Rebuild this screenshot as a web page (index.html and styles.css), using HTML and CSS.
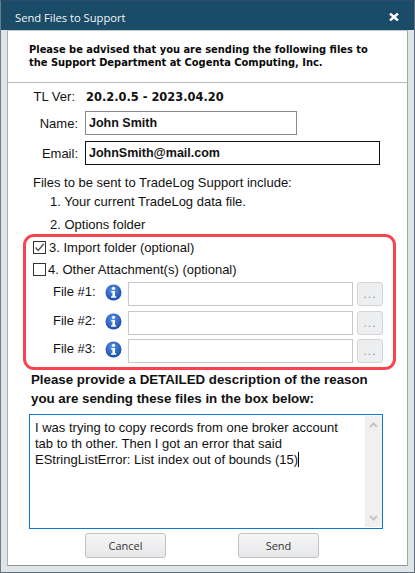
FILE: index.html
```html
<!DOCTYPE html>
<html lang="en">
<head>
<meta charset="utf-8">
<title>Send Files to Support</title>
<link rel="stylesheet" href="styles.css">
</head>
<body>
<div class="window">
  <div class="titlebar">
    <span class="title">Send Files to Support</span>
    <svg class="close" width="10" height="8" viewBox="0 0 10 8"><path d="M1 .5L9 7.500M9 .5L1 7.500" stroke="#fff" stroke-width="2.400" fill="none"/></svg>
  </div>
  <div class="frame">
    <div class="content">
      <div class="notice">Please be advised that you are sending the following files to<br>the Support Department at Cogenta Computing, Inc.</div>
      <div class="form">
        <div class="row ver-row"><span class="label ver-label">TL Ver:</span><span class="ver">20.2.0.5 - 2023.04.20</span></div>
        <div class="row name-row"><span class="label">Name:</span><div class="input name-input">John Smith</div></div>
        <div class="row email-row"><span class="label">Email:</span><div class="input email-input">JohnSmith@mail.com</div></div>
        <div class="line intro">Files to be sent to TradeLog Support include:</div>
        <div class="line item item-1">1. Your current TradeLog data file.</div>
        <div class="line item item-2">2. Options folder</div>
        <div class="optional">
          <div class="check-row"><span class="check"><svg width="13" height="13" viewBox="0 0 13 13"><path d="M2.500 6.500L5.200 9.500L10.800 2.800" stroke="#555" stroke-width="1.400" fill="none"/></svg></span><span>3. Import folder (optional)</span></div>
          <div class="check-row second"><span class="check"></span><span>4. Other Attachment(s) (optional)</span></div>
          <div class="file-row first">
            <span class="file-label">File #1:</span>
            <svg class="info" width="17" height="17" viewBox="0 0 17 17"><use href="#i"/></svg>
            <div class="file-input"></div><div class="browse">...</div>
          </div>
          <div class="file-row">
            <span class="file-label">File #2:</span>
            <svg class="info" width="17" height="17" viewBox="0 0 17 17"><use href="#i"/></svg>
            <div class="file-input"></div><div class="browse">...</div>
          </div>
          <div class="file-row last">
            <span class="file-label">File #3:</span>
            <svg class="info" width="17" height="17" viewBox="0 0 17 17"><use href="#i"/></svg>
            <div class="file-input"></div><div class="browse">...</div>
          </div>
        </div>
        <div class="prompt">Please provide a DETAILED description of the reason<br>you are sending these files in the box below:</div>
        <div class="memo">
          <div class="memo-text">I was trying to copy records from one broker account<br>tab to th other. Then I got an error that said<br>EStringListError: List index out of bounds (15)<span class="caret"></span></div>
          <div class="scroll">
            <svg width="9" height="6" viewBox="0 0 9 6"><path d="M1 5L4.500 1.500L8 5" stroke="#c4c4c4" stroke-width="2" fill="none"/></svg>
            <svg width="9" height="6" viewBox="0 0 9 6"><path d="M1 1L4.500 4.500L8 1" stroke="#c4c4c4" stroke-width="2" fill="none"/></svg>
          </div>
        </div>
        <div class="actions"><div class="btn">Cancel</div><div class="btn">Send</div></div>
      </div>
    </div>
  </div>
</div>
<svg class="defs" width="0" height="0">
  <defs>
    <radialGradient id="g" cx="45%" cy="35%" r="70%"><stop offset="0" stop-color="#5b94e6"/><stop offset="1" stop-color="#1546a8"/></radialGradient>
    <g id="i">
      <circle cx="8.500" cy="8.500" r="8" fill="url(#g)"/>
      <circle cx="8.500" cy="4.300" r="1.600" fill="#fff"/>
      <path d="M6.300 7h3.700v5.300h1.200v1.500H6.100v-1.500h1.300V8.500H6.300z" fill="#fff"/>
    </g>
  </defs>
</svg>
</body>
</html>
```
FILE: styles.css
```css
* { box-sizing: border-box; }
html, body { margin: 0; padding: 0; }
body { width: 415px; height: 573px; overflow: hidden; background: #fff; }
.defs { position: absolute; }
.window {
  width: 415px; height: 573px; display: flex; flex-direction: column;
  background: #e1e5e9; border: 1px solid #5d6f7d; border-top-color: #2f4a70; border-left-color: #6a7c88;
  font-family: "Liberation Sans", Arial, sans-serif; font-size: 13px; color: #111;
}
.titlebar {
  height: 29px; flex: none; display: flex; align-items: center; justify-content: space-between;
  padding: 3px 15px 0 14px; background: #1a4c68; color: #f2f6f8;
}
.title { font-family: "Open Sans", sans-serif; font-size: 11.200px; }
.frame { flex: 1; padding: 0 6px 6px 6px; display: flex; }
.content { flex: 1; background: #fff; border: 1px solid #8f9a92; border-right-color: #94b58a; border-top-color: #c4c8cb; display: flex; flex-direction: column; border-left-color: #aab0b4; }
.notice {
  height: 52px; flex: none; border-bottom: 1px solid #b4babd; padding: 12px 0 0 21px;
  font-family: "DejaVu Sans Condensed", "DejaVu Sans", sans-serif; font-weight: 700; font-size: 11px; line-height: 13px; color: #0a0a0a;
  white-space: nowrap;
}
.form { flex: 1; }
.row { display: flex; align-items: center; }
.label { width: 70px; text-align: right; margin-right: 7px; flex: none; }
.ver-row { height: 26px; }
.ver-row .label { width: 67px; margin-right: 10px; }
.ver { font-family: "DejaVu Sans Condensed", "DejaVu Sans", sans-serif; font-weight: 700; font-size: 12.700px; margin-left: 1px; }
.name-row { height: 24px; margin-top: 2px; }
.email-row { height: 24px; margin-top: 6px; }
.input { height: 24px; display: flex; align-items: center; padding-left: 3px; font-weight: 700; font-size: 12.500px; }
.name-input { width: 212px; border: 1px solid #8a8a8a; }
.email-input { width: 295px; border: 1px solid #111; margin-left: -1px; }
.email-row .label { margin-right: 8px; }
.line { white-space: nowrap; }
.intro { margin: 9px 0 0 25px; height: 18px; line-height: 18px; }
.item { margin-left: 42px; height: 18px; line-height: 18px; }
.item-1 { margin-top: 1px; }
.item-2 { margin-top: 5px; }
.optional {
  width: 373px; height: 136px; margin: 0 0 0 15px; border: 3px solid #f64550; border-radius: 11px;
  padding: 2px 0 0 7px;
}
.check-row { display: flex; align-items: center; height: 16px; gap: 3px; }
.check-row.second { margin-top: 6px; gap: 2px; }
.check { width: 13px; height: 13px; border: 1px solid #333; display: block; flex: none; position: relative; }
.check svg { position: absolute; left: -1px; top: -1px; }
.file-row { display: flex; align-items: center; height: 24px; margin-top: 5px; }
.file-row.first { margin-top: 5px; }
.file-row.last { margin-top: 4px; }
.file-label { width: 51px; margin-left: 20px; flex: none; position: relative; top: -3px; }
.info { margin-left: 1px; margin-right: 6px; flex: none; position: relative; top: -2px; }
.file-input { width: 225px; height: 24px; border: 1px solid #c8c8c8; background: #fff; }
.browse {
  width: 26px; height: 24px; margin-left: 4px; border: 1px solid #d2d4d6; border-radius: 3px; background: #eceef0;
  color: #999; text-align: center; font-size: 12px; line-height: 22px; letter-spacing: 1px;
}
.prompt { margin: 0 0 0 23px; font-weight: 700; font-size: 13.300px; line-height: 19px; height: 38px; white-space: nowrap; }
.memo {
  width: 354px; height: 115px; margin: 6px 0 0 21px; border: 1px solid #0f78d2; display: flex; justify-content: space-between;
}
.memo-text { padding: 5px 0 0 5px; font-size: 13px; line-height: 16px; white-space: nowrap; color: #111; }
.caret { display: inline-block; width: 1px; height: 15px; background: #000; vertical-align: -3px; }
.scroll { width: 17px; margin: 1px 0; background: #f0f0f0; display: flex; flex-direction: column; justify-content: space-between; align-items: center; padding: 6px 0; }
.actions { display: flex; gap: 72px; padding: 4px 0 0 77px; }
.btn {
  width: 81px; height: 25px; border: 1px solid #c0c2c4; border-radius: 3px;
  background: linear-gradient(#f6f6f7, #e6e7e9); color: #333; text-align: center;
  font-family: "Open Sans", sans-serif; font-size: 11px; line-height: 23px;
}
```
